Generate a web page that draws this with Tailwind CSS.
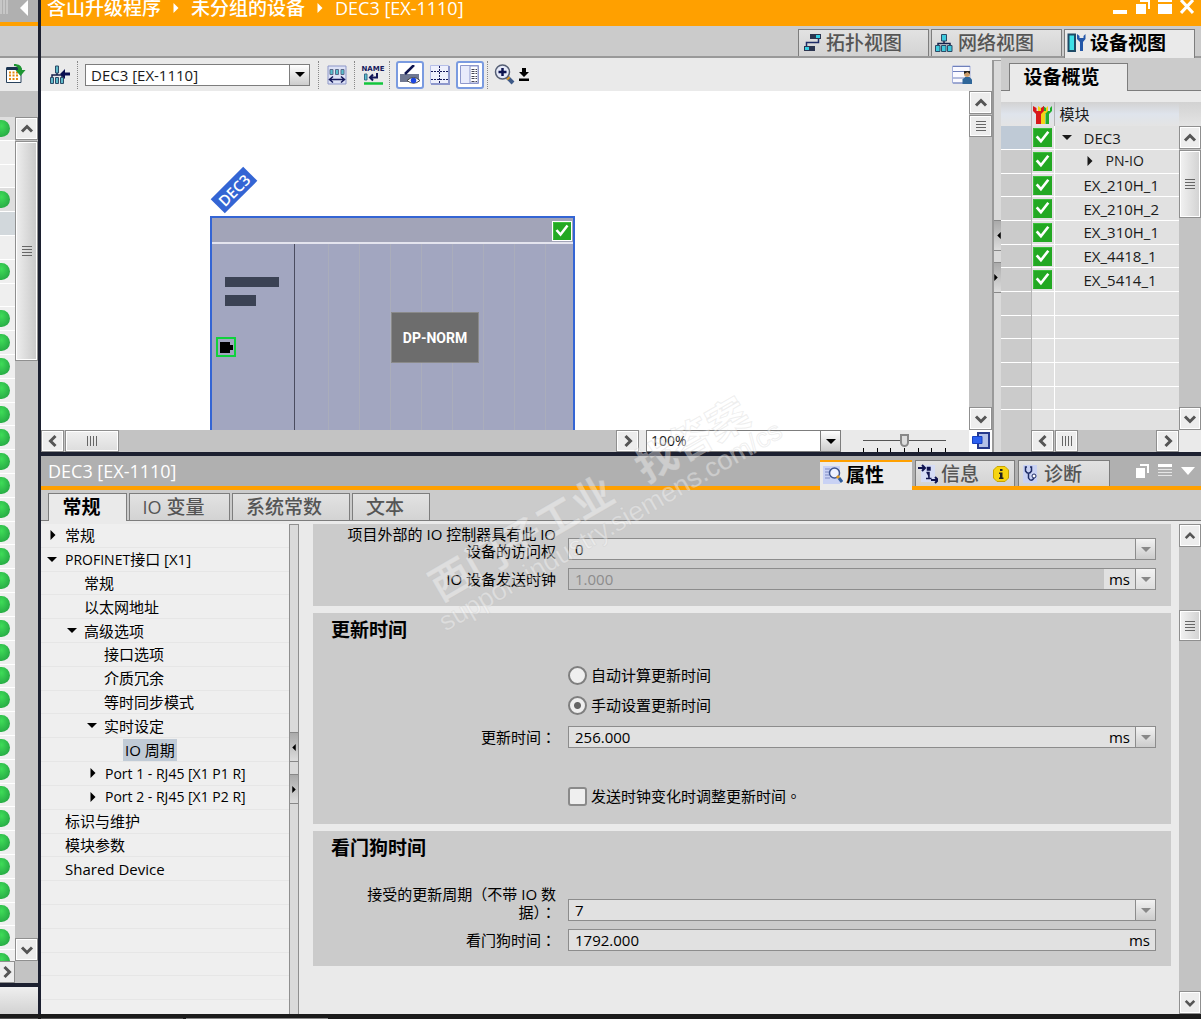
<!DOCTYPE html>
<html lang="zh-CN">
<head>
  <meta charset="utf-8">
  <meta name="viewport" content="width=device-width, initial-scale=1">
  <title>DEC3 [EX-1110]</title>
  <script src="https://cdn.jsdelivr.net/npm/@tailwindcss/browser@4"></script>
</head>
<body class="h-screen overflow-hidden flex flex-col bg-[#1c2030] font-['Open_Sans','Noto_Sans_CJK_SC',sans-serif] text-[15px]/[24px] text-[#1a1a1a]">

  <!-- shared icons -->
  <svg class="hidden">
    <symbol id="up" viewBox="0 0 14 14"><path d="M2 9.500 7 4.500 12 9.500" fill="none" stroke="#555" stroke-width="3"/></symbol>
    <symbol id="down" viewBox="0 0 14 14"><path d="M2 4.500 7 9.500 12 4.500" fill="none" stroke="#555" stroke-width="3"/></symbol>
    <symbol id="left" viewBox="0 0 14 14"><path d="M9.500 2 4.500 7 9.500 12" fill="none" stroke="#555" stroke-width="3"/></symbol>
    <symbol id="right" viewBox="0 0 14 14"><path d="M4.500 2 9.500 7 4.500 12" fill="none" stroke="#555" stroke-width="3"/></symbol>
    <symbol id="grip-h" viewBox="0 0 10 10"><path d="M0 .5H10M0 3.500H10M0 6.500H10M0 9.500H10" stroke="#666"/></symbol>
    <symbol id="grip-v" viewBox="0 0 10 10"><path d="M.5 0V10M3.500 0V10M6.500 0V10M9.500 0V10" stroke="#666"/></symbol>
    <symbol id="tri-down" viewBox="0 0 10 5"><path d="M0 0H10L5 5Z" fill="currentColor"/></symbol>
    <symbol id="tri-right" viewBox="0 0 5 10"><path d="M0 0V10L5 5Z" fill="currentColor"/></symbol>
    <symbol id="tri-left" viewBox="0 0 5 10"><path d="M5 0V10L0 5Z" fill="currentColor"/></symbol>
    <symbol id="check" viewBox="0 0 18 18"><path d="M0 0H18V18H0Z" fill="#23a823"/><path d="M.5 17.500V.5H17.500" fill="none" stroke="#3cc03c"/><path d="M3.500 8 7.500 12.500 14.500 3.500" fill="none" stroke="#fff" stroke-width="2.500"/></symbol>
    <symbol id="net" viewBox="0 0 18 18"><path d="M9 6V10M3 13V9.500H15V13" fill="none" stroke="#14204a" stroke-width="1.500"/><path d="M6.500 .5H11.500V7H6.500ZM.5 11.500H5V17.500H.5ZM6.500 11.500H11V17.500H6.500ZM12.500 11.500H17V17.500H12.500Z" fill="#3ec9dc" stroke="#2b4a66"/></symbol>
  </svg>

  <div class="flex-1 min-h-0 flex gap-[3px]">

    <!-- collapsed project tree -->
    <aside class="w-[38px] shrink-0 flex flex-col bg-[#c3c3c3]">
      <div class="h-[26px] shrink-0 flex items-start justify-between pr-[10px] bg-[#b0b0b0] border-b-4 border-[#ffa000] text-white">
        <svg class="w-[8px] h-[14px]"><path d="M1 0V14M4 0V14M7 0V14" stroke="#ddd"/></svg>
        <button aria-label="折叠"><svg class="w-[8px] h-[16px]" viewBox="0 0 8 16"><path d="M8 0V16L0 8Z" fill="#fff"/></svg></button>
      </div>
      <div class="h-[32px] shrink-0 bg-[#cbcbcb] border-b-2 border-[#999]"></div>
      <div class="h-[33px] shrink-0 pl-[6px] pt-[6px] bg-[#eaeaea]">
        <button aria-label="更新"><svg class="size-[20px]" viewBox="0 0 20 20"><path d="M.5 4H15V18.500H.5Z" fill="#fff" stroke="#29425c"/><path d="M.5 3H15V6H.5Z" fill="#1b3350"/><path d="M3 8.500H13M3 11.500H13M3 15H13" stroke="#e88a10" stroke-width="2" stroke-dasharray="2 1.500"/><path d="M8 0C13 0 16 2 16 6H19.500L14.500 12 9.500 6H12C12 3.500 11 2 8 2Z" fill="#1e9632"/></svg></button>
      </div>
      <div class="h-[26px] shrink-0"></div>
      <div class="flex-1 min-h-0 flex">
        <div class="w-[15px] overflow-hidden">
          <ul id="status-list" class="h-[857px] grid auto-rows-fr"></ul>
        </div>
        <div class="flex-1 flex flex-col">
          <button aria-label="向上" class="h-[23px] grid place-items-center border border-[#8f8f8f] bg-[#ededed] inset-ring inset-ring-white"><svg class="size-[14px]"><use href="#up"/></svg></button>
          <div class="h-[220px] mt-[1px] grid place-items-center border border-[#8f8f8f] bg-linear-to-r from-[#eee] to-[#c9c9c9] inset-ring inset-ring-white"><svg class="size-[10px]"><use href="#grip-h"/></svg></div>
          <div class="flex-1"></div>
          <button aria-label="向下" class="h-[23px] grid place-items-center border border-[#8f8f8f] bg-[#ededed] inset-ring inset-ring-white"><svg class="size-[14px]"><use href="#down"/></svg></button>
        </div>
      </div>
      <div class="h-[22px] shrink-0 flex">
        <button aria-label="向右" class="w-[15px] grid place-items-center border-y border-r border-[#8f8f8f] bg-[#ededed]"><svg class="size-[14px]"><use href="#right"/></svg></button>
      </div>
      <div class="h-[31px] shrink-0 border-t-4 border-[#1c2030] bg-linear-to-b from-[#efefef] to-[#d2d2d2]"></div>
    </aside>

    <main class="flex-1 min-w-0 flex flex-col gap-1">

      <!-- editor window -->
      <section class="h-[452px] shrink-0 flex flex-col bg-[#eaeaea]">
        <header class="h-[26px] shrink-0 flex items-start bg-[#ffa000] text-white pl-[6px] pr-[7px]">
          <h1 class="flex items-center gap-[12px] h-[16px] text-[19px]/[16px] font-medium">
            <span>含山升级程序</span>
            <svg class="w-[6px] h-[10px]"><use href="#tri-right"/></svg>
            <span>未分组的设备</span>
            <svg class="w-[6px] h-[10px]"><use href="#tri-right"/></svg>
            <span class="text-[18px] font-normal">DEC3 [EX-1110]</span>
          </h1>
          <div class="ml-auto flex items-end gap-[8px] h-[14px]">
            <button aria-label="最小化" class="w-[14px] h-[4px] bg-white"></button>
            <button aria-label="还原"><svg class="w-[15px] h-[14px]"><path d="M5 1H14V9" fill="none" stroke="#fff" stroke-width="2"/><path d="M1 4H11V14H1Z" fill="#fff"/></svg></button>
            <button aria-label="最大化"><svg class="w-[14px] h-[14px]"><path d="M0 0H14V2H0ZM0 4H14V14H0Z" fill="#fff"/></svg></button>
            <button aria-label="关闭"><svg class="w-[14px] h-[14px]"><path d="M1 0 13 13M13 0 1 13" stroke="#fff" stroke-width="3"/></svg></button>
          </div>
        </header>

        <nav class="h-[32px] shrink-0 flex items-end justify-end gap-[2px] pr-[6px] bg-[#cbcbcb] border-b-2 border-[#999] text-[19px]/[24px] font-medium text-[#555]">
          <button class="w-[131px] h-[27px] flex items-center gap-[4px] pl-[4px] pb-px border border-b-0 border-[#7d7d7d] bg-linear-to-b from-[#e2e2e2] to-[#d3d3d3]">
            <svg class="size-[19px]" viewBox="0 0 19 19"><path d="M7 1H18V6H7ZM1 13H12V18H1Z" fill="#2b3550"/><path d="M13 2H17V5H13ZM2 14H6V17H2Z" fill="#35cfe4"/><path d="M15.500 6V9.500H3.500V13" fill="none" stroke="#1d2b66" stroke-width="1.500"/></svg>
            拓扑视图
          </button>
          <button class="w-[131px] h-[27px] flex items-center gap-[5px] pl-[3px] pb-px border border-b-0 border-[#7d7d7d] bg-linear-to-b from-[#e2e2e2] to-[#d3d3d3]">
            <svg class="size-[18px]"><use href="#net"/></svg>
            网络视图
          </button>
          <button class="w-[131px] h-[29px] -mb-[2px] flex items-center gap-[4px] pl-[2px] pb-[3px] border border-b-0 border-[#7d7d7d] bg-[#eaeaea] font-bold text-black">
            <svg class="size-[19px]" viewBox="0 0 19 19"><path d="M1.500 1.500H8V18H1.500Z" fill="#3fe0e6" stroke="#1f4a66" stroke-width="2"/><path d="M10 1V6L13 9V18H16V9L18.500 6V1L16.500 3V5H12.500V3Z" fill="#2457a8"/></svg>
            设备视图
          </button>
        </nav>

        <div class="flex-1 min-h-0 flex">
          <div class="flex-1 min-w-0 flex flex-col">
            <div class="h-[33px] shrink-0 flex items-center pl-[9px] pr-[20px]">
              <button aria-label="网络"><svg class="size-[20px]" viewBox="0 0 20 20"><path d="M7 6V10M2 14V10H12V14" fill="none" stroke="#14204a" stroke-width="1.500"/><path d="M5.500 1H8.500V8H5.500ZM.5 12.500H3.500V18.500H.5ZM5.500 12.500H8.500V18.500H5.500ZM10.500 12.500H13.500V18.500H10.500Z" fill="#5fb9c9" stroke="#2b4a66"/><path d="M10 9 15 4V7.500H20V10.500H15V14Z" fill="#0b0f50"/></svg></button>
              <span class="h-[28px] mx-[7px] border-l border-dotted border-[#888]"></span>
              <div class="w-[225px] h-[22px] flex border border-[#7d7d7d] bg-white">
                <select aria-label="设备" class="flex-1 appearance-none pl-[5px] text-[15px]/[20px] outline-none"><option>DEC3 [EX-1110]</option></select>
                <span class="w-[20px] grid place-items-center border-l border-[#7d7d7d] bg-linear-to-b from-white to-[#ccc] text-black pointer-events-none"><svg class="w-[10px] h-[5px]"><use href="#tri-down"/></svg></span>
              </div>
              <span class="h-[28px] mx-[8px] border-l border-dotted border-[#888]"></span>
              <button aria-label="显示地址"><svg class="size-[20px]" viewBox="0 0 20 20"><path d="M1 1H19V19H1Z" fill="#dde2f6" stroke="#8d97c8"/><path d="M3 4.500H6V9.500H3ZM8.500 4.500H11.500V9.500H8.500ZM14 4.500H17V9.500H14Z" fill="#56c2cf" stroke="#5b6a88"/><path d="M3 14.500H17M6 11.500 2.500 14.500 6 17.500M14 11.500 17.500 14.500 14 17.500" fill="none" stroke="#14185a" stroke-width="1.500"/></svg></button>
              <span class="h-[28px] mx-[7px] border-l border-dotted border-[#888]"></span>
              <button aria-label="名称" class="w-[22px] flex flex-col items-center">
                <span class="font-['DejaVu_Sans',sans-serif] font-bold text-[7px]/[8px] text-[#14185a]">NAME</span>
                <svg class="w-[20px] h-[12px]" viewBox="0 0 20 12"><path d="M1.500 1H4V7H1.500Z" fill="#56c2cf" stroke="#3a6a88"/><path d="M14 0V4.500H7M10 1.500 7 4.500 10 7.500" fill="none" stroke="#14185a" stroke-width="2"/><path d="M1 10.500H20" stroke="#12c63c" stroke-width="2.500"/></svg>
              </button>
              <span class="h-[28px] mx-[5px] border-l border-dotted border-[#888]"></span>
              <button aria-label="显示标签" class="ml-px size-[28px] grid place-items-center rounded-[3px] border-2 border-[#7a9be0] bg-white"><svg class="size-[20px]" viewBox="0 0 20 20"><path d="M0 9H19V17H0Z" fill="#6f7892"/><path d="M5 9 14 0" stroke="#0d1450" stroke-width="2.500"/><path d="M7 15.500Q13.500 9.500 20 15.500 13.500 21 7 15.500Z" fill="#fff" stroke="#444"/><circle cx="13.500" cy="15.500" r="2.800" fill="#1c46e0"/></svg></button>
              <button aria-label="分页" class="ml-[6px]"><svg class="size-[20px]" viewBox="0 0 20 20"><path d="M.5 .5H18.500V18.500H.5Z" fill="#eef0fc" stroke="#b5bee8"/><path d="M19 1V19H1" fill="none" stroke="#8e98cc" stroke-width="2"/><path d="M9.500 1V18M1 6.500H18M1 14.500H18" stroke="#14185a" stroke-dasharray="2 1"/></svg></button>
              <button aria-label="概览" class="ml-[6px] size-[28px] grid place-items-center rounded-[3px] border-2 border-[#7a9be0] bg-white"><svg class="size-[20px]" viewBox="0 0 20 20"><path d="M.5 .5H18.500V18.500H.5Z" fill="#e8ebfb" stroke="#8e98cc"/><path d="M10 1H18V18H10Z" fill="#fff" stroke="#8e98cc"/><path d="M11.500 4.500H17M11.500 6.500H17M11.500 8.500H17M11.500 11.500H17M11.500 13.500H17M11.500 16.500H17" stroke="#445" stroke-dasharray="3 1"/></svg></button>
              <span class="h-[28px] mx-[3px] border-l border-dotted border-[#888]"></span>
              <button aria-label="缩放" class="ml-[3px]"><svg class="size-[21px]" viewBox="0 0 21 21"><path d="M13 13 19 19" stroke="#3e5a88" stroke-width="4"/><path d="M12 12 15 15" stroke="#e09a20" stroke-width="3.500"/><circle cx="8.500" cy="8" r="7" fill="#e6eaf8" stroke="#555e74" stroke-width="1.500"/><path d="M4.500 8H12.500M8.500 4V12" stroke="#0d1450" stroke-width="2.500"/></svg></button>
              <button aria-label="缩放选项" class="ml-[4px]"><svg class="w-[10px] h-[13px]"><path d="M3 0H7V4H10L5 9 0 4H3ZM0 10.500H10V13H0Z" fill="#000"/></svg></button>
              <button aria-label="窗口" class="ml-auto"><svg class="size-[20px]" viewBox="0 0 20 20"><path d="M.5 1H18V18H.5Z" fill="#fafaff" stroke="#a5b0dc"/><path d="M1 1.500H18M1 6.500H18M1 13H12M1 18H18" stroke="#6f80bb"/><path d="M10.500 19V14.500L13 12H17.500L20 14.500V19Z" fill="#2f6699"/><circle cx="15" cy="9" r="3" fill="#c99b6a"/><path d="M12 9V6H18V9L15.500 7Z" fill="#222"/></svg></button>
            </div>

            <div class="flex-1 min-h-0 flex">
              <!-- device canvas -->
              <div class="relative flex-1 overflow-hidden bg-white">
                <div class="absolute left-[170px] top-[89px] w-[46px] h-[20px] -rotate-45 bg-[#3465d4] text-white text-center text-[15px]/[20px] font-semibold">DEC3</div>
                <div class="absolute left-[169px] top-[125px] w-[365px] h-[260px] border-2 border-[#3465d4] bg-[#a2a6c0]">
                  <div class="h-[26px] flex justify-end items-start pt-[3px] pr-px bg-[#a2a4b8] border-b-2 border-[#e4e4ee]">
                    <span class="border border-white"><svg class="size-[18px]"><use href="#check"/></svg></span>
                  </div>
                  <div class="h-full flex">
                    <div class="w-[83px] border-r border-[#4b4c60] pl-[13px] pt-[33px]">
                      <div class="w-[54px] h-[10px] bg-[#3b4254]"></div>
                      <div class="w-[31px] h-[11px] mt-[8px] bg-[#3b4254]"></div>
                      <div class="-ml-[9px] mt-[31px] size-[20px] border-2 border-[#0fd23c] grid place-items-center"><svg class="w-[13px] h-[11px]"><path d="M0 0H10V3H13V8H10V11H0Z" fill="#000"/></svg></div>
                    </div>
                    <div class="flex-1 ml-[3px] pl-[93px] pt-[68px] bg-[repeating-linear-gradient(to_right,transparent_0px,transparent_30px,#aaadbb_30px,#aaadbb_31px)]">
                      <div class="w-[88px] h-[51px] border border-[#8a8a8a] bg-[#6d6d6d] text-white text-center font-['Roboto',sans-serif] font-bold text-[14px]/[50px]">DP-NORM</div>
                    </div>
                  </div>
                </div>
              </div>
              <div class="w-[23px] flex flex-col bg-[#c3c3c3]">
                <button aria-label="向上" class="h-[23px] grid place-items-center border border-[#8f8f8f] bg-[#ededed] inset-ring inset-ring-white"><svg class="size-[14px]"><use href="#up"/></svg></button>
                <div class="h-[22px] mt-[1px] grid place-items-center border border-[#8f8f8f] bg-[#ededed] inset-ring inset-ring-white"><svg class="size-[10px]"><use href="#grip-h"/></svg></div>
                <div class="flex-1"></div>
                <button aria-label="向下" class="h-[23px] grid place-items-center border border-[#8f8f8f] bg-[#ededed] inset-ring inset-ring-white"><svg class="size-[14px]"><use href="#down"/></svg></button>
              </div>
            </div>

            <div class="h-[22px] shrink-0 flex">
              <div class="flex-1 flex bg-[#c3c3c3]">
                <button aria-label="向左" class="w-[23px] grid place-items-center border border-[#8f8f8f] bg-[#ededed] inset-ring inset-ring-white"><svg class="size-[14px]"><use href="#left"/></svg></button>
                <div class="w-[54px] ml-[1px] grid place-items-center border border-[#8f8f8f] bg-linear-to-b from-[#f0f0f0] to-[#ddd] inset-ring inset-ring-white"><svg class="size-[10px]"><use href="#grip-v"/></svg></div>
                <button aria-label="向右" class="w-[23px] ml-auto grid place-items-center border border-[#8f8f8f] bg-[#ededed] inset-ring inset-ring-white"><svg class="size-[14px]"><use href="#right"/></svg></button>
              </div>
              <div class="w-[195px] mx-[7px] flex border border-[#7d7d7d] bg-white">
                <select aria-label="缩放比例" class="flex-1 appearance-none pl-[4px] text-[14px]/[20px] outline-none"><option>100%</option></select>
                <span class="w-[20px] grid place-items-center border-l border-[#7d7d7d] bg-linear-to-b from-white to-[#ccc] text-black pointer-events-none"><svg class="w-[10px] h-[5px]"><use href="#tri-down"/></svg></span>
              </div>
              <div class="w-[83px] ml-[15px] mr-[23px] flex flex-col justify-between pt-[4px]">
                <input type="range" aria-label="缩放" value="50" class="appearance-none w-full h-[13px] bg-[linear-gradient(#555,#555)] bg-size-[100%_1px] bg-center bg-no-repeat [&::-webkit-slider-thumb]:appearance-none [&::-webkit-slider-thumb]:w-[9px] [&::-webkit-slider-thumb]:h-[13px] [&::-webkit-slider-thumb]:bg-[#ddd] [&::-webkit-slider-thumb]:border-2 [&::-webkit-slider-thumb]:border-[#888] [&::-webkit-slider-thumb]:rounded-b-full">
                <div class="h-[4px] flex justify-between">
                  <i class="w-px bg-black"></i><i class="w-px bg-black"></i><i class="w-px bg-black"></i><i class="w-px bg-black"></i><i class="w-px bg-black"></i><i class="w-px bg-black"></i><i class="w-px bg-black"></i>
                </div>
              </div>
              <button aria-label="总览" class="w-[23px] grid place-items-center bg-white"><svg class="size-[18px]" viewBox="0 0 18 18"><path d="M6 1H17V16H6Z" fill="#b3c0e6" stroke="#26398c" stroke-width="2"/><path d="M.5 4.500H10V11.500H.5Z" fill="#2c60f0" stroke="#1740c0"/></svg></button>
            </div>
          </div>

          <div class="w-[9px] mt-[2px] flex flex-col border-l-2 border-t border-[#999] bg-[#dadada] pt-[159px]">
            <button aria-label="向左展开" class="h-[31px] grid place-items-center justify-end border-y border-[#888] bg-linear-to-b from-[#aaa] to-[#ddd] text-black"><svg class="w-[4px] h-[7px]"><use href="#tri-left"/></svg></button>
            <button aria-label="向右展开" class="h-[31px] mt-[11px] grid place-items-center justify-start border-y border-[#888] bg-linear-to-b from-[#aaa] to-[#ddd] text-black"><svg class="w-[4px] h-[7px]"><use href="#tri-right"/></svg></button>
          </div>

          <!-- device overview -->
          <div class="w-[200px] flex flex-col">
            <div class="h-[33px] shrink-0 flex items-end pl-[8px] mb-[11px] bg-[#cbcbcb] border-b border-[#7d7d7d]">
              <button class="w-[119px] h-[28px] -mb-px pr-[14px] pb-[2px] border border-b-0 border-[#7d7d7d] bg-[#eaeaea] text-[19px]/[24px] font-bold text-black">设备概览</button>
            </div>
            <div class="flex-1 min-h-0 flex">
              <div class="flex-1 overflow-hidden bg-[#e1e1e1]">
                <table class="w-full h-[332px] table-fixed border-collapse text-[15px]/[20px]">
                  <thead>
                    <tr class="bg-linear-to-b from-[#d2d2d2] via-[#dfe4ec] to-[#e4e4e4]">
                      <th class="w-[30px] h-[24px] p-0 border-r border-[#b5b5b5]"></th>
                      <th class="w-[23px] p-0 pl-[1px] border-r border-[#b5b5b5]"><svg class="size-[19px]" viewBox="0 0 19 19"><path d="M10 1V6L12.500 9V19H16V9L19 6V1L17 3V6H13V3Z" fill="#1fae2c"/><path d="M5 1V6L8 9V19H12V9L15 6V1L13 3V6H8V3Z" fill="#f2d416"/><path d="M0 1V6L3 9V19H8V9L11 6V1L8 3V6H3.500V3Z" fill="#d8181c"/></svg></th>
                      <th class="p-0 pl-[5px] text-left font-normal">模块</th>
                    </tr>
                  </thead>
                  <tbody id="modules"></tbody>
                </table>
              </div>
              <div class="w-[22px] flex flex-col bg-[#c3c3c3]">
                <div class="h-[24px] bg-linear-to-b from-[#d2d2d2] to-[#e4e4e4]"></div>
                <button aria-label="向上" class="h-[23px] grid place-items-center border border-[#8f8f8f] bg-[#ededed] inset-ring inset-ring-white"><svg class="size-[14px]"><use href="#up"/></svg></button>
                <div class="h-[68px] mt-[1px] grid place-items-center border border-[#8f8f8f] bg-linear-to-r from-[#f2f2f2] to-[#d2d2d2] inset-ring inset-ring-white"><svg class="size-[10px]"><use href="#grip-h"/></svg></div>
                <div class="flex-1"></div>
                <button aria-label="向下" class="h-[23px] grid place-items-center border border-[#8f8f8f] bg-[#ededed] inset-ring inset-ring-white"><svg class="size-[14px]"><use href="#down"/></svg></button>
              </div>
            </div>
            <div class="h-[22px] shrink-0 flex">
              <div class="w-[30px] bg-[#cbcbcb]"></div>
              <div class="flex-1 flex bg-[#c3c3c3]">
                <button aria-label="向左" class="w-[23px] grid place-items-center border border-[#8f8f8f] bg-[#ededed] inset-ring inset-ring-white"><svg class="size-[14px]"><use href="#left"/></svg></button>
                <div class="w-[23px] ml-[1px] grid place-items-center border border-[#8f8f8f] bg-[#ededed] inset-ring inset-ring-white"><svg class="size-[10px]"><use href="#grip-v"/></svg></div>
                <button aria-label="向右" class="w-[23px] ml-auto grid place-items-center border border-[#8f8f8f] bg-[#ededed] inset-ring inset-ring-white"><svg class="size-[14px]"><use href="#right"/></svg></button>
              </div>
              <div class="w-[22px]"></div>
            </div>
          </div>
        </div>
      </section>

      <!-- inspector window -->
      <section class="flex-1 min-h-0 flex flex-col bg-[#eaeaea]">
        <header class="h-[34px] shrink-0 flex items-end pl-[7px] pr-[6px] bg-[#b0b0b0] border-b-4 border-[#ffa000]">
          <h2 class="self-center text-[18px]/[24px] text-white">DEC3 [EX-1110]</h2>
          <div class="ml-auto flex items-end gap-[3px] text-[19px]/[24px] font-medium text-[#555]">
            <button class="w-[92px] h-[30px] -mb-[4px] flex items-center gap-[3px] pl-[3px] pb-[3px] border-t-2 border-[#ffa000] bg-[#eaeaea] font-bold text-black">
              <svg class="size-[20px]" viewBox="0 0 20 20"><path d="M0 1H17V19H0Z" fill="#c9d2f4"/><path d="M2 4H7M2 7H6M2 10H6M2 13H7" stroke="#7f8bc4"/><circle cx="11.500" cy="8" r="5" fill="#eef2ff" stroke="#3d5490" stroke-width="1.500"/><path d="M14 11 16 13" stroke="#e09a20" stroke-width="3"/><path d="M16 13 19 17" stroke="#2f5c9c" stroke-width="3"/></svg>
              属性
            </button>
            <button class="w-[100px] h-[26px] flex items-center gap-[3px] pl-[2px] border border-b-0 border-[#7d7d7d] bg-linear-to-b from-[#e2e2e2] to-[#d3d3d3]">
              <svg class="size-[20px]" viewBox="0 0 20 20"><path d="M3 1H17V18H3Z" fill="#d5dcf6"/><path d="M0 4H6M4 1 7 4 4 7M13 16H19M17 13 20 16 17 19" fill="none" stroke="#101450" stroke-width="2"/><path d="M8.500 8.500H11V14M8 14.500H13.500M9.500 3.500H12V6H9.500Z" fill="#101450" stroke="#101450" stroke-width="1.500"/></svg>
              信息
              <svg class="size-[16px] ml-auto mr-[5px]" viewBox="0 0 16 16"><path d="M4 .5H12L15.500 4V12L12 15.500H4L.5 12V4Z" fill="#f6d410" stroke="#c9a400"/><path d="M7 3H9.500V5H7ZM6 6.500H9.500V11.500H10.500V13H6V11.500H7V8H6Z" fill="#222"/></svg>
            </button>
            <button class="w-[92px] h-[26px] flex items-center gap-[5px] pl-[4px] border border-b-0 border-[#7d7d7d] bg-linear-to-b from-[#e2e2e2] to-[#d3d3d3]">
              <svg class="w-[16px] h-[20px]" viewBox="0 0 16 20"><path d="M0 1H14V19H0Z" fill="#c9d2f4"/><path d="M4 3H2.500V7Q5.500 11.500 8.500 7V3H7M5.500 9.500V14Q8 18.500 11 14" fill="none" stroke="#1d2b66" stroke-width="1.500"/><circle cx="11" cy="12" r="2" fill="#fff" stroke="#1d2b66"/></svg>
              诊断
            </button>
          </div>
          <div class="ml-[26px] self-center mb-[1px] flex items-center gap-[9px] text-white">
            <button aria-label="浮动"><svg class="w-[13px] h-[14px]"><path d="M4 1H12V9" fill="none" stroke="#fff" stroke-width="2"/><path d="M0 4H9V14H0Z" fill="#fff"/></svg></button>
            <button aria-label="平铺"><svg class="w-[14px] h-[14px]"><path d="M0 1.500H14" stroke="#fff" stroke-width="3"/><path d="M0 5.500H14M0 8.500H14M0 11.500H14" stroke="#e6e6e6"/></svg></button>
            <button aria-label="折叠"><svg class="w-[14px] h-[8px]" viewBox="0 0 14 8"><path d="M0 0H14L7 8Z" fill="#fff"/></svg></button>
          </div>
        </header>

        <nav class="h-[31px] shrink-0 flex items-end gap-[2px] pl-[7px] bg-[#cbcbcb] border-b border-[#7d7d7d] text-[19px]/[24px] font-medium text-[#555]">
          <button class="w-[79px] h-[28px] -mb-px pr-[12px] pb-[2px] border border-b-0 border-[#7d7d7d] bg-[#eaeaea] font-bold text-black">常规</button>
          <button class="w-[101px] h-[27px] pr-[12px] border border-b-0 border-[#7d7d7d] bg-linear-to-b from-[#e2e2e2] to-[#d3d3d3]"><span class="text-[18px] font-normal">IO</span> 变量</button>
          <button class="w-[118px] h-[27px] pr-[14px] border border-b-0 border-[#7d7d7d] bg-linear-to-b from-[#e2e2e2] to-[#d3d3d3]">系统常数</button>
          <button class="w-[78px] h-[27px] pr-[12px] border border-b-0 border-[#7d7d7d] bg-linear-to-b from-[#e2e2e2] to-[#d3d3d3]">文本</button>
        </nav>

        <div class="flex-1 min-h-0 flex pt-[3px]">
          <div class="w-[248px] shrink-0 overflow-hidden bg-[#efefef] text-black">
            <ul class="h-[500px] grid auto-rows-fr">
              <li class="flex items-center border-b border-[#e6e6e6] pl-[9px] gap-[9px]"><svg class="w-[6px] h-[10px]"><use href="#tri-right"/></svg><a href="#">常规</a></li>
              <li class="flex items-center border-b border-[#e6e6e6] pl-[6px] gap-[8px]"><svg class="w-[10px] h-[5px]"><use href="#tri-down"/></svg><a href="#" class="whitespace-pre"><span class="text-[14px]">PROFINET</span>接口 [X1]</a></li>
              <li class="flex items-center border-b border-[#e6e6e6] pl-[43px]"><a href="#">常规</a></li>
              <li class="flex items-center border-b border-[#e6e6e6] pl-[43px]"><a href="#">以太网地址</a></li>
              <li class="flex items-center border-b border-[#e6e6e6] pl-[26px] gap-[7px]"><svg class="w-[10px] h-[5px]"><use href="#tri-down"/></svg><a href="#">高级选项</a></li>
              <li class="flex items-center border-b border-[#e6e6e6] pl-[63px]"><a href="#">接口选项</a></li>
              <li class="flex items-center border-b border-[#e6e6e6] pl-[63px]"><a href="#">介质冗余</a></li>
              <li class="flex items-center border-b border-[#e6e6e6] pl-[63px]"><a href="#">等时同步模式</a></li>
              <li class="flex items-center border-b border-[#e6e6e6] pl-[46px] gap-[7px]"><svg class="w-[10px] h-[5px]"><use href="#tri-down"/></svg><a href="#">实时设定</a></li>
              <li class="flex items-center border-b border-[#e6e6e6] pl-[82px]"><a href="#" aria-current="true" class="px-[2px] leading-[22px] bg-[#c1cbd6]">IO 周期</a></li>
              <li class="flex items-center border-b border-[#e6e6e6] pl-[49px] gap-[9px]"><svg class="w-[6px] h-[10px]"><use href="#tri-right"/></svg><a href="#" class="text-[14px]">Port 1 - RJ45 [X1 P1 R]</a></li>
              <li class="flex items-center border-b border-[#e6e6e6] pl-[49px] gap-[9px]"><svg class="w-[6px] h-[10px]"><use href="#tri-right"/></svg><a href="#" class="text-[14px]">Port 2 - RJ45 [X1 P2 R]</a></li>
              <li class="flex items-center border-b border-[#e6e6e6] pl-[24px]"><a href="#">标识与维护</a></li>
              <li class="flex items-center border-b border-[#e6e6e6] pl-[24px]"><a href="#">模块参数</a></li>
              <li class="flex items-center border-b border-[#e6e6e6] pl-[24px]"><a href="#">Shared Device</a></li>
              <li class="border-b border-[#e6e6e6]"></li>
              <li class="border-b border-[#e6e6e6]"></li>
              <li class="border-b border-[#e6e6e6]"></li>
              <li class="border-b border-[#e6e6e6]"></li>
              <li class="border-b border-[#e6e6e6]"></li>
              <li></li>
            </ul>
          </div>

          <div class="w-[10px] shrink-0 flex flex-col border-x border-t border-[#8f8f8f] bg-[#dadada] pt-[207px]">
            <button aria-label="向左展开" class="h-[30px] grid place-items-center border-y border-[#888] bg-linear-to-b from-[#aaa] to-[#ddd] text-black"><svg class="w-[4px] h-[7px]"><use href="#tri-left"/></svg></button>
            <button aria-label="向右展开" class="h-[30px] mt-[12px] grid place-items-center border-y border-[#888] bg-linear-to-b from-[#aaa] to-[#ddd] text-black"><svg class="w-[4px] h-[7px]"><use href="#tri-right"/></svg></button>
          </div>

          <form class="flex-1 min-w-0 overflow-hidden flex flex-col gap-[7px] pl-[14px] pr-[8px] text-black">
            <section class="grid grid-cols-[243px_1fr] gap-x-[12px] gap-y-[8px] items-end pt-[2px] pb-[16px] pr-[15px] bg-[#cbcbcb]">
              <label for="access" class="text-right leading-[17px]">项目外部的 IO 控制器具有此 IO<br>设备的访问权</label>
              <div class="h-[22px] flex border border-[#8c8c8c] bg-[#e1e1e1]">
                <select id="access" class="flex-1 appearance-none pl-[6px] text-[15px]/[20px] outline-none"><option>0</option></select>
                <span class="w-[20px] grid place-items-center border-l border-[#8c8c8c] bg-linear-to-b from-[#f2f2f2] to-[#ccc] text-[#888] pointer-events-none"><svg class="w-[10px] h-[5px]"><use href="#tri-down"/></svg></span>
              </div>
              <label for="clock" class="text-right leading-[22px]">IO 设备发送时钟</label>
              <div class="h-[22px] flex border border-[#8c8c8c] bg-[#c6c6c6]">
                <select id="clock" disabled class="flex-1 appearance-none pl-[6px] text-[15px]/[20px] text-[#8c8c8c] opacity-100"><option>1.000</option></select>
                <span class="w-[31px] text-center text-[15px]/[20px] bg-[#e1e1e1]">ms</span>
                <span class="w-[20px] grid place-items-center border-l border-[#8c8c8c] bg-linear-to-b from-[#f2f2f2] to-[#ddd] text-[#888] pointer-events-none"><svg class="w-[10px] h-[5px]"><use href="#tri-down"/></svg></span>
              </div>
            </section>

            <section class="pt-[4px] pb-[17px] pr-[15px] bg-[#cbcbcb]">
              <h3 class="pl-[18px] mb-[21px] text-[19px]/[26px] font-bold">更新时间</h3>
              <div class="grid grid-cols-[243px_1fr] gap-x-[12px] gap-y-[8px] items-center">
                <label class="col-start-2 h-[22px] flex items-center gap-[4px]"><input type="radio" name="mode" class="appearance-none size-[19px] rounded-full border-2 border-[#7f7f7f] bg-[#efefef]">自动计算更新时间</label>
                <label class="col-start-2 h-[22px] flex items-center gap-[4px]"><input type="radio" name="mode" checked class="appearance-none size-[19px] rounded-full border-2 border-[#7f7f7f] bg-[radial-gradient(circle,#666_3px,#efefef_4px)]">手动设置更新时间</label>
                <label for="update" class="text-right leading-[26px]">更新时间<span class="font-['Noto_Sans_CJK_TC',sans-serif]" lang="zh-TW">：</span></label>
                <div class="h-[22px] flex border border-[#8c8c8c] bg-[#e1e1e1]">
                  <select id="update" class="flex-1 appearance-none pl-[6px] text-[15px]/[20px] outline-none"><option>256.000</option></select>
                  <span class="w-[31px] text-center text-[15px]/[20px]">ms</span>
                  <span class="w-[20px] grid place-items-center border-l border-[#8c8c8c] bg-linear-to-b from-[#f2f2f2] to-[#ccc] text-[#888] pointer-events-none"><svg class="w-[10px] h-[5px]"><use href="#tri-down"/></svg></span>
                </div>
                <label class="col-start-2 h-[22px] mt-[27px] flex items-center gap-[4px]"><input type="checkbox" class="appearance-none size-[19px] rounded-[3px] border-2 border-[#8a8a8a] bg-[#efefef]"><span>发送时钟变化时调整更新时间<span class="font-['Noto_Sans_CJK_TC',sans-serif]" lang="zh-TW">。</span></span></label>
              </div>
            </section>

            <section class="pt-[4px] pb-[15px] pr-[15px] bg-[#cbcbcb]">
              <h3 class="pl-[18px] mb-[25px] text-[19px]/[26px] font-bold">看门狗时间</h3>
              <div class="grid grid-cols-[243px_1fr] gap-x-[12px] gap-y-[8px] items-end">
                <label for="cycles" class="text-right leading-[17px]">接受的更新周期（不带 IO 数<br>据）<span class="font-['Noto_Sans_CJK_TC',sans-serif]" lang="zh-TW">：</span></label>
                <div class="h-[22px] flex border border-[#8c8c8c] bg-[#e1e1e1]">
                  <select id="cycles" class="flex-1 appearance-none pl-[6px] text-[15px]/[20px] outline-none"><option>7</option></select>
                  <span class="w-[20px] grid place-items-center border-l border-[#8c8c8c] bg-linear-to-b from-[#f2f2f2] to-[#ccc] text-[#888] pointer-events-none"><svg class="w-[10px] h-[5px]"><use href="#tri-down"/></svg></span>
                </div>
                <label for="watchdog" class="text-right leading-[22px]">看门狗时间<span class="font-['Noto_Sans_CJK_TC',sans-serif]" lang="zh-TW">：</span></label>
                <div class="h-[22px] flex border border-[#8c8c8c] bg-[#e1e1e1]">
                  <input id="watchdog" type="text" value="1792.000" class="flex-1 min-w-0 pl-[6px] text-[15px]/[20px] outline-none">
                  <span class="w-[31px] text-center text-[15px]/[20px]">ms</span>
                </div>
              </div>
            </section>
          </form>

          <div class="w-[22px] shrink-0 flex flex-col bg-[#c3c3c3]">
            <button aria-label="向上" class="h-[23px] grid place-items-center border border-[#8f8f8f] bg-[#ededed] inset-ring inset-ring-white"><svg class="size-[12px]"><use href="#up"/></svg></button>
            <div class="h-[31px] mt-[63px] grid place-items-center border border-[#8f8f8f] bg-linear-to-r from-[#f2f2f2] to-[#d2d2d2] inset-ring inset-ring-white"><svg class="size-[10px]"><use href="#grip-h"/></svg></div>
            <div class="flex-1"></div>
            <button aria-label="向下" class="h-[23px] grid place-items-center border border-[#8f8f8f] bg-[#ededed] inset-ring inset-ring-white"><svg class="size-[12px]"><use href="#down"/></svg></button>
          </div>
        </div>
      </section>
    </main>
  </div>

  <!-- taskbar edge -->
  <footer class="h-[5px] shrink-0 flex items-end gap-[3px] bg-[#1b1b1b]">
    <span class="w-[38px] h-px bg-[#555]"></span>
    <span class="w-[142px] h-px bg-[#555]"></span>
    <span class="w-[142px] h-px bg-[#888]"></span>
  </footer>

  <div class="absolute left-[448px] top-[566px] origin-bottom-left -rotate-30 whitespace-nowrap pointer-events-none select-none text-white/40 [-webkit-text-stroke:1px_rgba(190,190,190,0.25)]">
    <div class="pl-[10px] flex gap-[33px] h-[42px] text-[41px]/[42px] font-bold"><span>西门子工业</span><span>找答案</span></div>
    <div class="font-['Liberation_Sans',sans-serif] h-[28px] text-[27px]/[28px]">support.industry.siemens.com/cs</div>
  </div>

  <script>
    // rows of the project tree without an online status
    const noDot = [1, 2, 4, 5, 7];
    const list = document.getElementById('status-list');
    for (let i = 0; i < 36; i++) {
      const li = document.createElement('li');
      li.className = i === 4 ? 'flex items-center border-b border-white bg-[#d2d8dc]'
        : i === 0 || i === 3 ? 'flex items-center border-b border-white bg-[#dedede]'
        : 'flex items-center border-b border-white bg-[#efefef]';
      if (!noDot.includes(i)) {
        li.innerHTML = '<span class="-ml-[7px] size-[17px] shrink-0 rounded-full bg-radial-[at_50%_35%] from-[#3fdc58] to-[#1f9a3e]"></span>';
      }
      list.append(li);
    }

    const modules = ['DEC3', 'PN-IO', 'EX_210H_1', 'EX_210H_2', 'EX_310H_1', 'EX_4418_1', 'EX_5414_1', '', '', '', '', '', ''];
    const check = '<svg class="size-[19px]"><use href="#check"/></svg>';
    const name = (text, i) => {
      if (i === 0) return '<span class="flex items-center gap-[12px] pl-[7px]"><svg class="w-[10px] h-[5px]"><use href="#tri-down"/></svg>' + text + '</span>';
      if (i === 1) return '<span class="flex items-center gap-[13px] pl-[32px] text-[14px]"><svg class="w-[6px] h-[10px]"><use href="#tri-right"/></svg>' + text + '</span>';
      return '<span class="pl-[29px]">' + text + '</span>';
    };
    document.getElementById('modules').innerHTML = modules.map((text, i) =>
      '<tr class="border-b border-white">' +
      '<td class="h-[23px] p-0 border-r border-[#b5b5b5] ' + (i ? 'bg-[#cbcbcb]' : 'bg-[#bfcad6]') + '"></td>' +
      '<td class="p-0 pl-px border-r border-white">' + (text && check) + '</td>' +
      '<td class="p-0">' + (text && name(text, i)) + '</td></tr>').join('');
  </script>
</body>
</html>
